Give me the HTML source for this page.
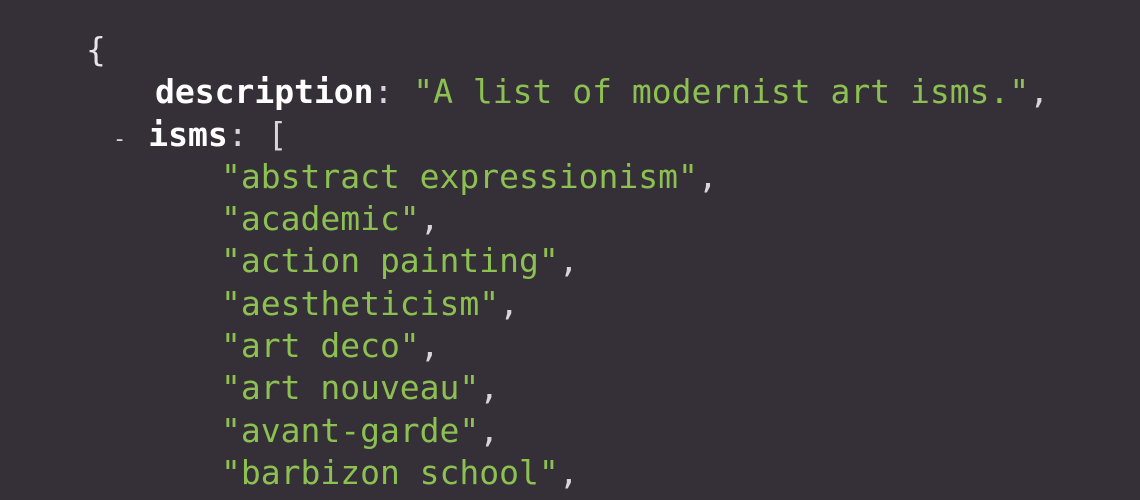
<!DOCTYPE html>
<html><head><style>
html,body{margin:0;padding:0;background:#352f37;width:1140px;height:500px;overflow:hidden}
.c{position:absolute;left:0;top:29px;font-family:"DejaVu Sans Mono","Liberation Mono",monospace;font-size:33px;line-height:42.3px;color:#e8e4ea}
.l{position:relative;height:42.3px;white-space:pre}
.k{color:#fff;font-weight:bold}
.s{color:#8cc152}
.p{color:#d9d4dc}
</style></head><body>
<div class="c"><div class="l" style="left:86px">{</div><div class="l" style="left:155px"><span class="k">description</span><span class="p">: </span><span class="s">"A list of modernist art isms."</span><span class="p">,</span></div><div class="l" style="left:113px"><span class="p" style="font-size:22px">-</span><span style="margin-left:22px" class="k">isms</span><span class="p">: [</span></div><div class="l" style="left:221px"><span class="s">"abstract expressionism"</span><span class="p">,</span></div><div class="l" style="left:221px"><span class="s">"academic"</span><span class="p">,</span></div><div class="l" style="left:221px"><span class="s">"action painting"</span><span class="p">,</span></div><div class="l" style="left:221px"><span class="s">"aestheticism"</span><span class="p">,</span></div><div class="l" style="left:221px"><span class="s">"art deco"</span><span class="p">,</span></div><div class="l" style="left:221px"><span class="s">"art nouveau"</span><span class="p">,</span></div><div class="l" style="left:221px"><span class="s">"avant-garde"</span><span class="p">,</span></div><div class="l" style="left:221px"><span class="s">"barbizon school"</span><span class="p">,</span></div></div>
</body></html>
